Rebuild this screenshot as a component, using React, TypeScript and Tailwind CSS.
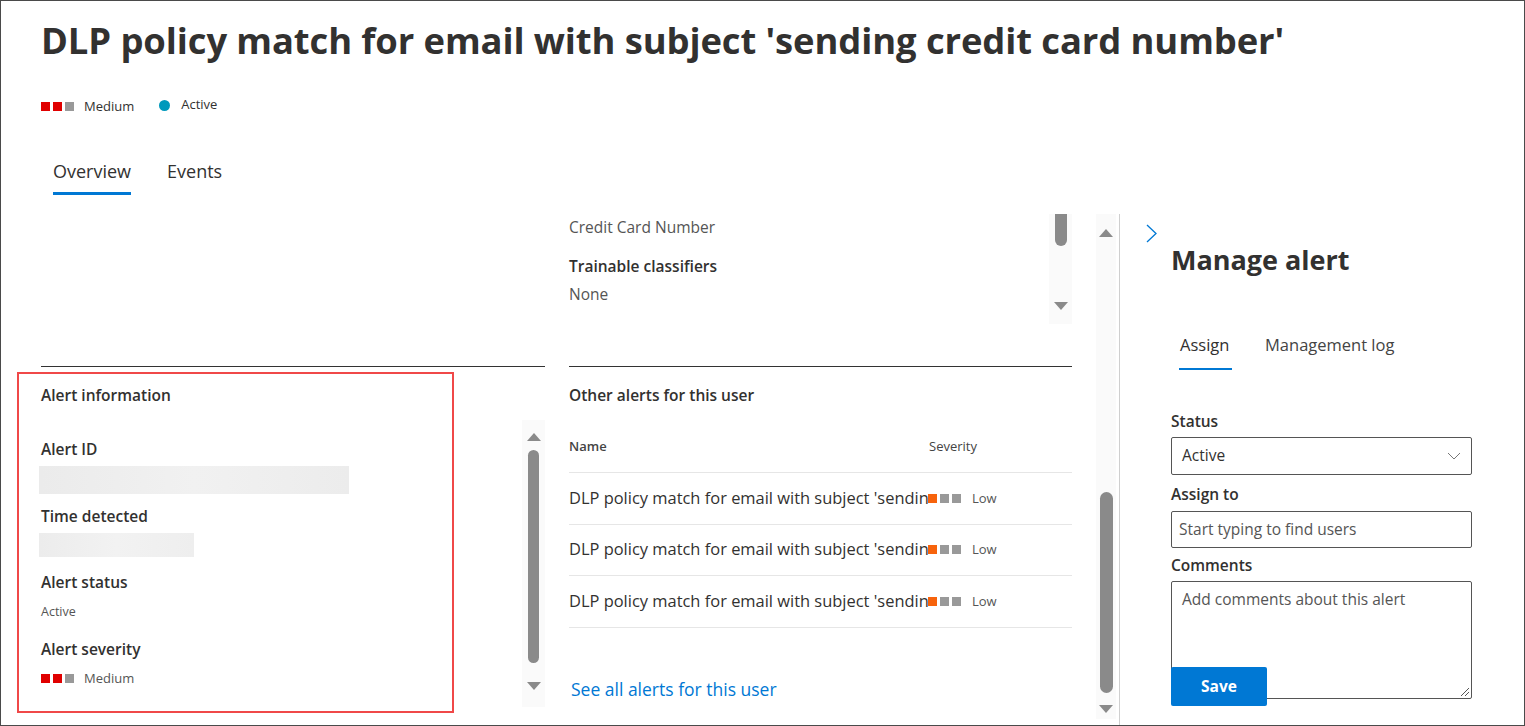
import React from "react";

function Squares({ colors }: { colors: string[] }) {
  return (
    <div className="flex gap-[3px]">
      {colors.map((c, i) => (
        <div key={i} className="w-[9px] h-[9px]" style={{ background: c }} />
      ))}
    </div>
  );
}

function UpArrow() {
  return (
    <svg width="14" height="8" viewBox="0 0 14 8">
      <polygon points="7,0 14,8 0,8" fill="#8a8a8a" />
    </svg>
  );
}
function DownArrow() {
  return (
    <svg width="14" height="8" viewBox="0 0 14 8">
      <polygon points="0,0 14,0 7,8" fill="#8a8a8a" />
    </svg>
  );
}

const RED = ["#e00000", "#e00000", "#999999"];
const LOW = ["#f7630c", "#999999", "#999999"];

export default function App() {
  return (
    <div className="w-[1525px] h-[726px] border border-[#4a4a4a] bg-white relative overflow-hidden font-['Open_Sans',sans-serif] text-[#323130]">
      {/* Header */}
      <div className="pl-[40px] pt-[17px]">
        <h1 className="text-[36.4px] leading-[44px] font-bold tracking-[-0.1px] text-[#323130] whitespace-nowrap">
          DLP policy match for email with subject 'sending credit card number'
        </h1>
        <div className="flex items-center mt-[33px] h-[20px]">
          <div className="mt-[3px]"><Squares colors={RED} /></div>
          <span className="ml-[10px] text-[13px] text-[#323130] mt-[3px]">Medium</span>
          <div className="ml-[25px] w-[11px] h-[11px] rounded-full bg-[#0099bc]" />
          <span className="ml-[11px] text-[13px] text-[#323130]">Active</span>
        </div>
        <div className="flex mt-[43px] pl-[12px] gap-[36px]">
          <div className="flex flex-col items-center">
            <span className="text-[18px] leading-[26px] text-[#323130]">Overview</span>
            <div className="mt-[8px] h-[3px] w-full bg-[#0078d4]" />
          </div>
          <span className="text-[18px] leading-[26px] text-[#323130]">Events</span>
        </div>
      </div>

      {/* Body */}
      <div className="flex mt-[19px] h-[512px]">
        <div className="flex pl-[40px]">
          {/* Left column */}
          <div className="w-[504px] flex flex-col">
            <div className="h-[153px] border-b border-[#333]" />
            <div className="flex flex-1">
              <div className="flex-1 flex flex-col">
                <div className="pt-[16px] text-[15.5px] leading-[24px] font-semibold">Alert information</div>
                <div className="mt-[30px] text-[15.5px] leading-[24px] font-semibold">Alert ID</div>
                <div className="mt-[5px] -ml-[2px] w-[310px] h-[28px] bg-linear-to-r from-[#ebebeb] via-[#f1f1f1] to-[#ececec]" />
                <div className="mt-[10px] text-[15.5px] leading-[24px] font-semibold">Time detected</div>
                <div className="mt-[5px] -ml-[2px] w-[155px] h-[24px] bg-linear-to-r from-[#ececec] via-[#f2f2f2] to-[#eeeeee]" />
                <div className="mt-[13px] text-[15.5px] leading-[24px] font-semibold">Alert status</div>
                <div className="mt-[8px] text-[12.5px] leading-[20px] text-[#555]">Active</div>
                <div className="mt-[15px] text-[15.5px] leading-[24px] font-semibold">Alert severity</div>
                <div className="mt-[8px] flex items-center">
                  <Squares colors={RED} />
                  <span className="ml-[10px] text-[13px] text-[#555]">Medium</span>
                </div>
              </div>
              <div className="w-[23px] mt-[53px] h-[287px] bg-[#fafafa] flex flex-col items-center pt-[13px]">
                <UpArrow />
                <div className="mt-[9px] w-[11px] h-[213px] rounded-full bg-[#8a8a8a]" />
                <div className="mt-[19px]"><DownArrow /></div>
              </div>
            </div>
          </div>

          {/* Middle column */}
          <div className="w-[503px] ml-[24px] flex flex-col">
            <div className="h-[153px] border-b border-[#333] flex">
              <div className="flex-1">
                <div className="text-[15.5px] leading-[24px] text-[#555] pt-[1px]">Credit Card Number</div>
                <div className="mt-[15px] text-[15.5px] leading-[24px] font-semibold">Trainable classifiers</div>
                <div className="mt-[4px] text-[15.5px] leading-[24px] text-[#555]">None</div>
              </div>
              <div className="w-[23px] h-[110px] bg-[#fafafa] flex flex-col items-center">
                <div className="w-[12px] h-[32px] rounded-b-full bg-[#8a8a8a]" />
                <div className="mt-[56px]"><DownArrow /></div>
              </div>
            </div>
            <div className="flex flex-col">
              <div className="pt-[16px] text-[15.5px] leading-[24px] font-semibold">Other alerts for this user</div>
              <div className="mt-[27px] flex items-center h-[39px] border-b border-[#e6e6e6] pb-[13px]">
                <span className="w-[360px] text-[13px] font-semibold text-[#444]">Name</span>
                <span className="text-[13px] text-[#444]">Severity</span>
              </div>
              {[0, 1, 2].map((i) => (
                <div key={i} className="flex items-center h-[51.5px] border-b border-[#e6e6e6]">
                  <span className="w-[359px] shrink-0 whitespace-nowrap text-[16.45px] text-[#323130]">
                    DLP policy match for email with subject 'sendin
                  </span>
                  <Squares colors={LOW} />
                  <span className="ml-[11px] text-[13px] text-[#555]">Low</span>
                </div>
              ))}
              <a className="mt-[48px] ml-[2px] text-[17.5px] leading-[26px] text-[#0078d4]">See all alerts for this user</a>
            </div>
          </div>

          {/* Page scrollbar */}
          <div className="w-[20px] ml-[24px] h-[505px] bg-[#fafafa] flex flex-col items-center pt-[15px]">
            <UpArrow />
            <div className="mt-[255px] w-[13px] h-[201px] rounded-full bg-[#8a8a8a]" />
            <div className="mt-[12px]"><DownArrow /></div>
          </div>
        </div>

        {/* Divider */}
        <div className="ml-[3px] w-[1px] h-full bg-[#cfcfcf]" />

        {/* Right panel */}
        <div className="flex-1 pl-[27px] pr-[52px] relative">
          <svg className="absolute left-[26px] top-[10px]" width="12" height="19" viewBox="0 0 12 19">
            <polyline points="1,1 10,9.5 1,18" fill="none" stroke="#0078d4" strokeWidth="1.3" />
          </svg>
          <div className="pl-[24px] pt-[28px] text-[27px] leading-[36px] font-bold text-[#323130]">Manage alert</div>
          <div className="flex mt-[54px] pl-[33px] gap-[33px]">
            <div className="flex flex-col items-start">
              <span className="text-[16.5px] leading-[26px] text-[#323130]">Assign</span>
              <div className="mt-[10px] -ml-[1px] h-[2px] w-[53px] bg-[#0078d4]" />
            </div>
            <span className="text-[16.5px] leading-[26px] text-[#444]">Management log</span>
          </div>
          <div className="pl-[24px] mt-[39px] flex flex-col">
            <div className="text-[15.5px] leading-[24px] font-semibold">Status</div>
            <div className="mt-[4px] h-[38px] border border-[#555] rounded-[2px] flex items-center justify-between pl-[10px] pr-[10px]">
              <span className="text-[15.5px] text-[#323130]">Active</span>
              <svg width="14" height="8" viewBox="0 0 14 8">
                <polyline points="1,1 7,7 13,1" fill="none" stroke="#777" strokeWidth="1" />
              </svg>
            </div>
            <div className="mt-[7px] text-[15.5px] leading-[24px] font-semibold">Assign to</div>
            <div className="mt-[5px] h-[37px] border border-[#555] rounded-[2px] flex items-center pl-[7px]">
              <span className="text-[15.5px] text-[#555]">Start typing to find users</span>
            </div>
            <div className="mt-[5px] text-[15.5px] leading-[24px] font-semibold">Comments</div>
            <div className="mt-[4px] h-[118px] border border-[#555] rounded-[2px] relative">
              <span className="absolute left-[10px] top-[6px] text-[15.5px] text-[#555]">Add comments about this alert</span>
              <svg className="absolute right-[1px] bottom-[1px]" width="10" height="10" viewBox="0 0 10 10">
                <line x1="1" y1="9" x2="9" y2="1" stroke="#555" strokeWidth="1" />
                <line x1="5" y1="9" x2="9" y2="5" stroke="#555" strokeWidth="1" />
              </svg>
              <button className="absolute -left-[1px] top-[85px] w-[96px] h-[39px] rounded-[2px] bg-[#0078d4] text-white text-[15.5px] font-bold">
                Save
              </button>
            </div>
          </div>
        </div>
      </div>

      {/* Annotation box */}
      <div className="absolute left-[16px] top-[371px] w-[437px] h-[341px] border-[2px] border-[#f04848] pointer-events-none" />
    </div>
  );
}
